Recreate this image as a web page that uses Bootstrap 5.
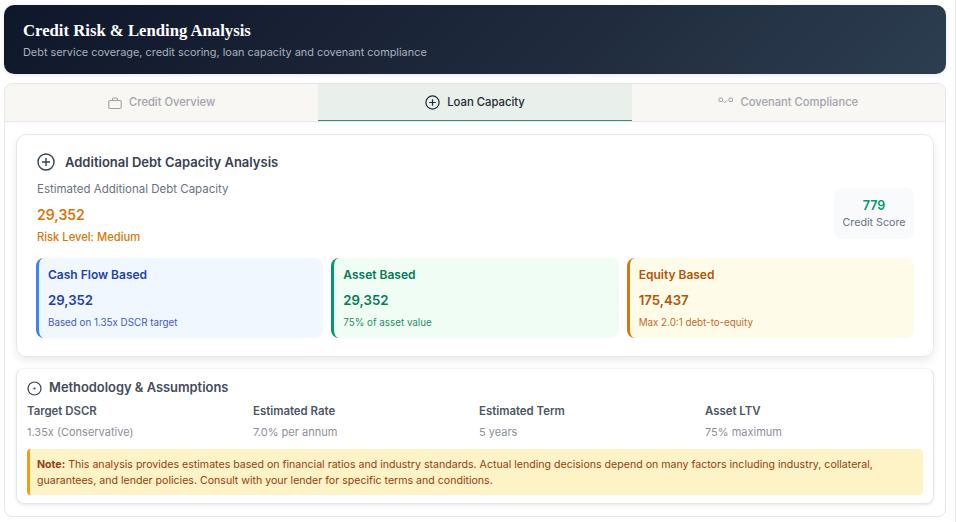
<!DOCTYPE html>
<html lang="en">
<head>
  <meta charset="UTF-8">
  <title>Credit Risk &amp; Lending Analysis</title>
  <meta name="viewport" content="width=device-width, initial-scale=1">
  <link href="https://cdn.jsdelivr.net/npm/bootstrap@5.3.2/dist/css/bootstrap.min.css" rel="stylesheet" />
  <style>
    body {
      background-color: #fff;
      font-family: "Inter", "Liberation Sans", sans-serif;
      font-size: 11px;
      overflow: hidden;
    }
    .page-wrap {
      width: 956px;
      height: 522px;
      padding: 5px 9px 0 4px;
      border-right: 1px solid #e8e8e8;
    }
    .hero {
      height: 69px;
      padding: 16px 19px;
      border-radius: 10px;
      background: linear-gradient(135deg, #0f172a 0%, #1e293b 55%, #2c3e50 100%);
      box-shadow: 0 1px 4px rgba(0, 0, 0, .1);
    }
    .hero h1 {
      font-family: "Liberation Serif", serif;
      font-size: 16.7px;
      font-weight: 700;
      line-height: 20px;
      color: #fff;
      margin: 0 0 4px;
    }
    .hero p {
      font-size: 10.9px;
      line-height: 15px;
      color: #a9b1bd;
      margin: 0;
    }
    .tab-panel {
      margin-top: 9px;
      height: 434px;
      border: 1px solid #e6e6e6;
      border-radius: 8px;
    }
    .tab-strip {
      height: 38px;
      background: #f8f7f4;
      border-bottom: 1px solid #e6e6e6;
      border-radius: 7px 7px 0 0;
    }
    .tab-item {
      flex: 1 1 0;
      gap: 7px;
      color: #a3a3ab;
      font-size: 11.2px;
      font-weight: 500;
    }
    .tab-item.is-active {
      background: #e9efeb;
      border-bottom: 1px solid #3f9079;
      color: #1f2933;
      font-size: 11.3px;
    }
    .panel-body {
      padding: 12px 11px 0;
    }
    .debt-card {
      height: 223px;
      padding: 17px 19px 0 20px;
      border: 1px solid #e5e7eb;
      border-radius: 10px;
      box-shadow: 0 4px 8px rgba(0, 0, 0, .08);
    }
    .debt-title {
      gap: 10px;
      font-size: 13px;
      font-weight: 600;
      line-height: 20px;
      color: #374151;
    }
    .muted-line {
      color: #6b7280;
      font-size: 11.5px;
      line-height: 14px;
      margin-top: 10px;
    }
    .big-amount {
      color: #d97706;
      font-size: 14px;
      font-weight: 600;
      line-height: 18px;
      margin-top: 10px;
    }
    .risk-line {
      color: #d97706;
      font-size: 11.2px;
      font-weight: 500;
      line-height: 14px;
      margin-top: 6px;
    }
    .score-box {
      width: 80px;
      height: 51px;
      margin-top: 16px;
      border-radius: 8px;
      background: #f8fafc;
      text-align: center;
      padding-top: 9px;
    }
    .score-num {
      color: #059669;
      font-size: 12.5px;
      font-weight: 600;
      line-height: 17px;
    }
    .score-label {
      color: #6b7280;
      font-size: 10.7px;
      line-height: 16px;
      margin-top: 1px;
    }
    .metric-row {
      gap: 8px;
      margin: 14px 0 0 -1px;
    }
    .metric-box {
      flex: 1 1 0;
      height: 80px;
      padding: 9px 9px 0;
      border-left: 3px solid;
      border-radius: 8px;
    }
    .metric-name {
      font-size: 12px;
      font-weight: 600;
      line-height: 16px;
    }
    .metric-value {
      font-size: 13.2px;
      font-weight: 600;
      line-height: 18px;
      margin-top: 8px;
    }
    .metric-note {
      font-size: 9.8px;
      line-height: 12px;
      margin-top: 8px;
      opacity: .85;
    }
    .tone-blue { background: #f0f7ff; border-color: #3b82f6; color: #1e40af; }
    .tone-green { background: #f0fdf4; border-color: #059669; color: #047857; }
    .tone-amber { background: #fefce8; border-color: #d97706; color: #b45309; }
    .method-card {
      height: 136px;
      margin-top: 11px;
      padding: 10px 10px 0 10px;
      border: 1px solid #e5e7eb;
      border-top-color: #f3f4f6;
      border-radius: 8px;
      box-shadow: 0 1px 3px rgba(0, 0, 0, .1);
    }
    .method-title {
      gap: 7px;
      color: #434c5a;
      font-size: 12.9px;
      font-weight: 600;
      line-height: 18px;
    }
    .method-grid {
      display: grid;
      grid-template-columns: repeat(4, 226px);
      margin-top: 7px;
    }
    .method-grid b {
      display: block;
      color: #4b5563;
      font-size: 11.4px;
      font-weight: 600;
      line-height: 14px;
    }
    .method-grid span {
      display: block;
      color: #8b8f99;
      font-size: 11px;
      line-height: 14px;
      margin-top: 7px;
    }
    .note-box {
      margin-top: 10px;
      height: 46px;
      padding: 8px 7px 0 7px;
      background: #fef3c7;
      border-left: 3px solid #f59e0b;
      border-radius: 4px;
      color: #92400e;
      font-size: 10.6px;
      line-height: 16px;
    }
    .note-box strong { font-weight: 700; }
  </style>
</head>
<body>

<div class="page-wrap">
  <div class="hero">
    <h1>Credit Risk &amp; Lending Analysis</h1>
    <p>Debt service coverage, credit scoring, loan capacity and covenant compliance</p>
  </div>

  <div class="tab-panel">
    <div class="tab-strip d-flex">
      <div class="tab-item d-flex align-items-center justify-content-center">
        <svg width="14" height="14" viewBox="0 0 14 14" fill="none" stroke="#a3a09c" stroke-width="1.1"><rect x=".8" y="4.5" width="12.4" height="8" rx="1.2"/><path d="M4.5 4.5V3a1 1 0 0 1 1-1h3a1 1 0 0 1 1 1v1.500"/></svg>
        <span>Credit Overview</span>
      </div>
      <div class="tab-item is-active d-flex align-items-center justify-content-center">
        <svg width="15" height="15" viewBox="0 0 15 15" fill="none" stroke="#1f2933" stroke-width="1.200"><circle cx="7.500" cy="7.500" r="6.600"/><path d="M7.500 4.200v6.600M4.200 7.500h6.600"/></svg>
        <span>Loan Capacity</span>
      </div>
      <div class="tab-item d-flex align-items-center justify-content-center">
        <svg class="mb-1" width="15" height="8" viewBox="0 0 15 8" fill="none" stroke="#a3a3ab" stroke-width="1"><rect x="1" y="1" width="3.500" height="3.500" rx=".5"/><rect x="11" y="1" width="3.500" height="3.500" rx=".5"/><path d="M5.500 4.500l1.300 1.300 2.300-2.500"/></svg>
        <span>Covenant Compliance</span>
      </div>
    </div>

    <div class="panel-body">
      <div class="debt-card">
        <div class="debt-title d-flex align-items-center">
          <svg width="18" height="18" viewBox="0 0 18 18" fill="none" stroke="#374151" stroke-width="1.400"><circle cx="9" cy="9" r="8"/><path d="M9 5v8M5 9h8"/></svg>
          <span>Additional Debt Capacity Analysis</span>
        </div>
        <div class="d-flex justify-content-between align-items-start">
          <div>
            <div class="muted-line">Estimated Additional Debt Capacity</div>
            <div class="big-amount">29,352</div>
            <div class="risk-line">Risk Level: Medium</div>
          </div>
          <div class="score-box">
            <div class="score-num">779</div>
            <div class="score-label">Credit Score</div>
          </div>
        </div>
        <div class="metric-row d-flex">
          <div class="metric-box tone-blue">
            <div class="metric-name">Cash Flow Based</div>
            <div class="metric-value">29,352</div>
            <div class="metric-note">Based on 1.35x DSCR target</div>
          </div>
          <div class="metric-box tone-green">
            <div class="metric-name">Asset Based</div>
            <div class="metric-value">29,352</div>
            <div class="metric-note">75% of asset value</div>
          </div>
          <div class="metric-box tone-amber">
            <div class="metric-name">Equity Based</div>
            <div class="metric-value">175,437</div>
            <div class="metric-note">Max 2.0:1 debt-to-equity</div>
          </div>
        </div>
      </div>

      <div class="method-card">
        <div class="method-title d-flex align-items-center">
          <svg width="15" height="15" viewBox="0 0 15 15" fill="none" stroke="#374151" stroke-width="1.200"><circle cx="7.500" cy="7.500" r="6.500"/><circle cx="7.500" cy="7.500" r=".5" fill="#374151"/></svg>
          <span>Methodology &amp; Assumptions</span>
        </div>
        <div class="method-grid">
          <div><b>Target DSCR</b><span>1.35x (Conservative)</span></div>
          <div><b>Estimated Rate</b><span>7.0% per annum</span></div>
          <div><b>Estimated Term</b><span>5 years</span></div>
          <div><b>Asset LTV</b><span>75% maximum</span></div>
        </div>
        <div class="note-box">
          <strong>Note:</strong> This analysis provides estimates based on financial ratios and industry standards. Actual lending decisions depend on many factors including industry, collateral, guarantees, and lender policies. Consult with your lender for specific terms and conditions.
        </div>
      </div>
    </div>
  </div>
</div>

<script src="https://cdn.jsdelivr.net/npm/bootstrap@5.3.2/dist/js/bootstrap.bundle.min.js"></script>
</body>
</html>
